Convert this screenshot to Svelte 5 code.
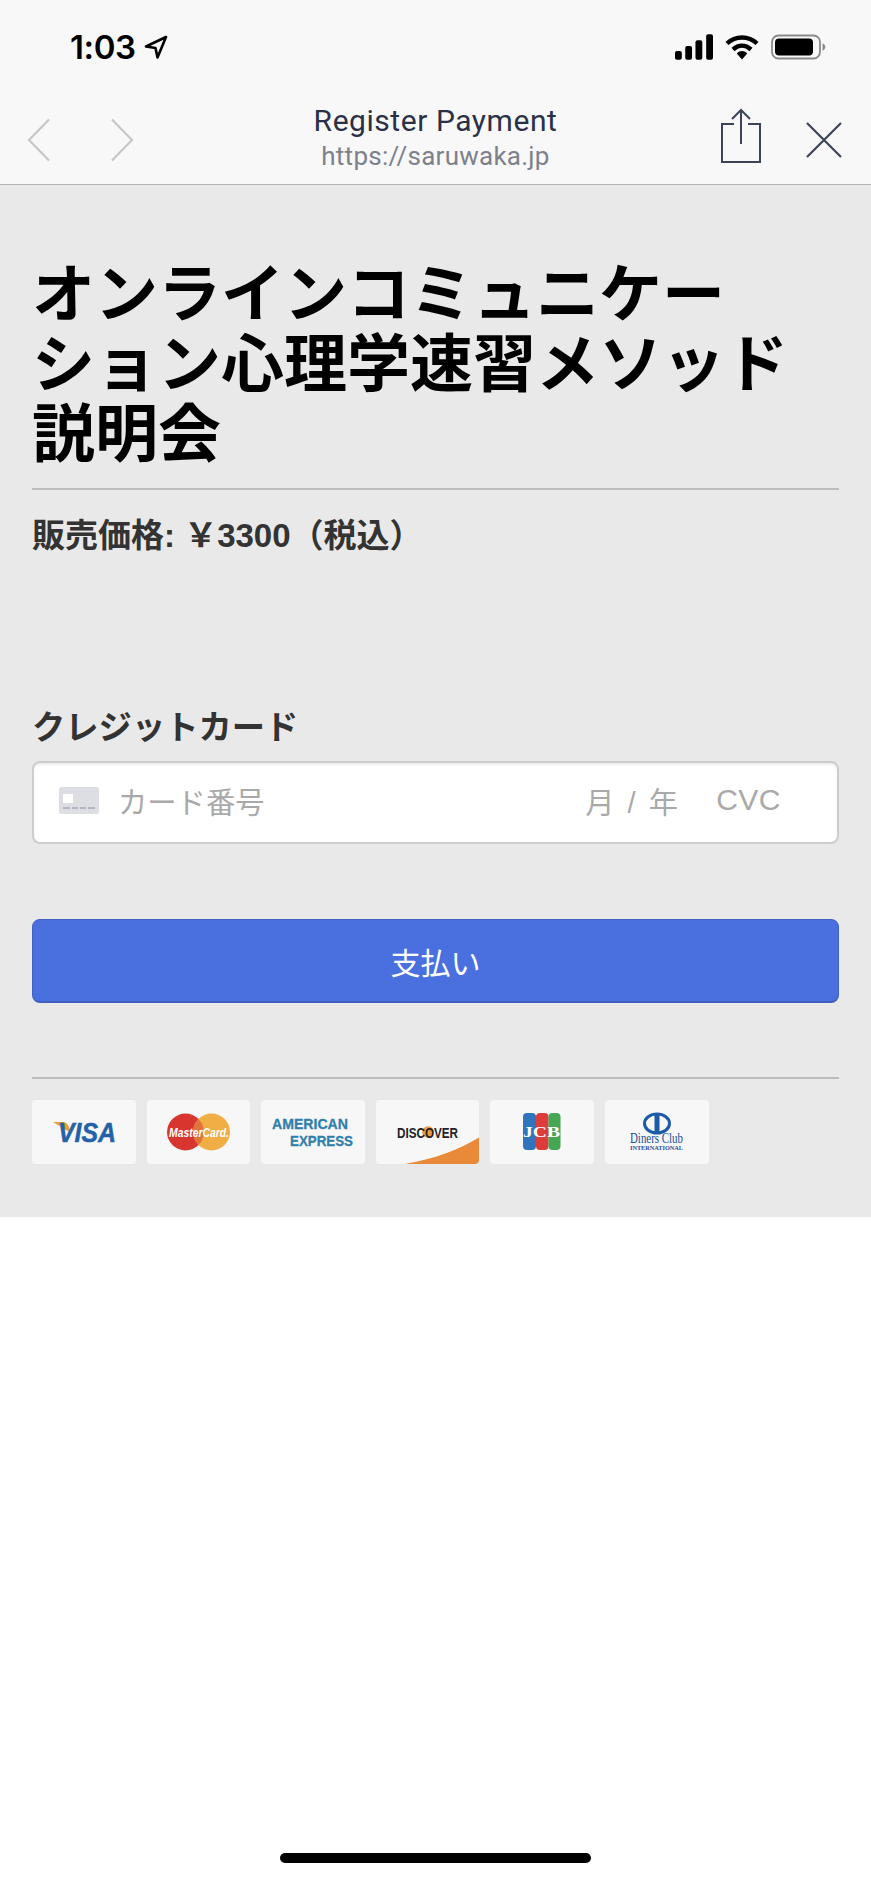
<script>
  // Schermata di pagamento dentro una webview iOS
  const titolo = "オンラインコミュニケーション心理学速習メソッド説明会";
</script>

<div class="screen">
  <div class="status">
    <div class="time">1:03
      <svg class="loc" width="24" height="24" viewBox="0 0 24 24"><path d="M22 2 2 11.500l9.500 1.500 2 9.500z" fill="none" stroke="#000" stroke-width="2.600" stroke-linejoin="round"/></svg>
    </div>
    <div class="status-right">
      <svg width="38" height="26" viewBox="0 0 39 26"><rect x="0" y="17" width="7" height="9" rx="2"/><rect x="10.500" y="12" width="7" height="14" rx="2"/><rect x="21" y="6" width="7" height="20" rx="2"/><rect x="32" y="0" width="7" height="26" rx="2"/></svg>
      <svg width="34" height="26" viewBox="0 0 34 26"><path d="M2 9.500C10.500 1.500 23.500 1.500 32 9.500" fill="none" stroke="#000" stroke-width="4.400"/><path d="M8 15.500C13.500 10.500 20.500 10.500 26 15.500" fill="none" stroke="#000" stroke-width="4.400"/><path d="M11.800 19.500C15 16.300 19 16.300 22.200 19.500L17 25.500z"/></svg>
      <svg width="55" height="26" viewBox="0 0 55 26"><rect x="1" y="1.500" width="48" height="23" rx="6.500" fill="none" stroke="#8a8a8a" stroke-width="1.800"/><rect x="4" y="4.500" width="38" height="17" rx="4"/><path d="M51.500 9.500c2 .6 2.800 2 2.800 3.500s-.8 2.900-2.800 3.500z" fill="#8a8a8a"/></svg>
    </div>
  </div>

  <div class="nav">
    <div class="arrows">
      <svg width="24" height="44" viewBox="0 0 24 44"><path d="M22 1.500 2 22l20 20.500" fill="none" stroke="#c6c7c9" stroke-width="2.200"/></svg>
      <svg width="24" height="44" viewBox="0 0 24 44"><path d="M2 1.500 22 22 2 42.500" fill="none" stroke="#c6c7c9" stroke-width="2.200"/></svg>
    </div>
    <div class="nav-title">
      <div class="nt1">Register Payment</div>
      <div class="nt2">https://saruwaka.jp</div>
    </div>
    <div class="nav-actions">
      <svg width="42" height="56" viewBox="0 0 42 56"><path d="M14 16H2v38h38V16H28" fill="none" stroke="#3d4457" stroke-width="2"/><path d="M21 36V2M12 11l9-9 9 9" fill="none" stroke="#3d4457" stroke-width="2"/></svg>
      <svg width="38" height="38" viewBox="0 0 38 38"><path d="M2 2l34 34M36 2 2 36" fill="none" stroke="#3d4457" stroke-width="2.200"/></svg>
    </div>
  </div>

  <main class="pay" lang="ja">
    <h1>{titolo}</h1>
    <div class="price">販売価格: ￥3300（税込）</div>

    <label class="lab" for="card">クレジットカード</label>
    <div class="field" id="card">
      <svg class="cardicon" width="40" height="27" viewBox="0 0 40 27"><rect width="40" height="27" rx="2.500" fill="#dcdee4"/><rect x="4" y="7" width="10" height="9" fill="#fff"/><path d="M4 21h7M13 21h6M21 21h6M29 21h7" stroke="#b4b7c0" stroke-width="2"/></svg>
      <span class="num">カード番号</span>
      <span class="exp">月 / 年</span>
      <span class="cvc">CVC</span>
    </div>

    <button class="paybtn">支払い</button>

    <div class="brands">
      <div class="brand">
        <svg width="104" height="64" viewBox="0 0 104 64"><path d="M21 22h10q3 0 5 3l3 8z" fill="#e4a231"/><text x="26" y="42" class="visa" textLength="58" lengthAdjust="spacingAndGlyphs">VISA</text></svg>
      </div>
      <div class="brand">
        <svg width="104" height="64" viewBox="0 0 104 64"><circle cx="38.500" cy="32" r="18.500" fill="#d9352f"/><circle cx="64.500" cy="32" r="18.500" fill="#f0ae45"/><path d="M51.500 19a18.500 18.500 0 0 1 0 26 18.500 18.500 0 0 1 0-26z" fill="#e0743a"/><text x="22" y="36.500" class="mc" textLength="60" lengthAdjust="spacingAndGlyphs">MasterCard.</text></svg>
      </div>
      <div class="brand">
        <svg width="104" height="64" viewBox="0 0 104 64"><text x="11" y="29" class="amex" textLength="76" lengthAdjust="spacingAndGlyphs">AMERICAN</text><text x="29" y="45.500" class="amex" textLength="63" lengthAdjust="spacingAndGlyphs">EXPRESS</text></svg>
      </div>
      <div class="brand">
        <svg width="104" height="64" viewBox="0 0 104 64"><path d="M29 64C60 59 84 49 104 37v23a4 4 0 0 1-4 4z" fill="#e98a39"/><circle cx="52" cy="32" r="5.800" fill="#ef9a3f"/><text x="21" y="37.500" class="dis" textLength="61" lengthAdjust="spacingAndGlyphs">DISCOVER</text></svg>
      </div>
      <div class="brand">
        <svg width="104" height="64" viewBox="0 0 104 64"><rect x="33" y="13" width="13" height="37" rx="4" fill="#2f74bd"/><rect x="46" y="13" width="12.500" height="37" rx="4" fill="#de3b3b"/><rect x="58.500" y="13" width="12" height="37" rx="4" fill="#45a653"/><text x="33" y="36.500" class="jcb" textLength="37" lengthAdjust="spacingAndGlyphs">JCB</text></svg>
      </div>
      <div class="brand">
        <svg width="104" height="64" viewBox="0 0 104 64"><ellipse cx="52" cy="23.500" rx="12.500" ry="9.500" fill="none" stroke="#1d5aa8" stroke-width="3"/><rect x="49.500" y="15" width="5" height="17" fill="#1d5aa8"/><text x="25" y="43" class="din" textLength="53" lengthAdjust="spacingAndGlyphs">Diners Club</text><text x="25" y="50" class="din2" textLength="53" lengthAdjust="spacingAndGlyphs">INTERNATIONAL</text></svg>
      </div>
    </div>
  </main>

  <div class="homebar"></div>
</div>

<style>
  :global(body) { background: #fff; }
  .screen { width: 871px; height: 1884px; display: flex; flex-direction: column; font-family: "Liberation Sans", "Noto Sans CJK JP", sans-serif; }

  .status { height: 90px; background: #f8f8f8; display: flex; align-items: center; justify-content: space-between; padding: 4px 45px 0 70px; box-sizing: border-box; }
  .time { font: 600 33px Inter, "Liberation Sans", sans-serif; letter-spacing: -.4px; color: #000; display: flex; align-items: center; gap: 8px; }
  .status-right { display: flex; align-items: center; gap: 12px; }

  .nav { height: 94px; background: #f8f8f8; border-bottom: 1px solid #b5b5b5; display: flex; align-items: center; position: relative; padding: 0 28px 0 27px; }
  .arrows { display: flex; gap: 59px; margin-top: 6px; }
  .nav-title { position: absolute; left: 0; right: 0; text-align: center; top: 14px; font-family: Roboto, sans-serif; }
  .nt1 { font-size: 30px; line-height: 34px; color: #2a3147; letter-spacing: .55px; }
  .nt2 { font-size: 26px; line-height: 36px; color: #7d818b; letter-spacing: .25px; }
  .nav-actions { margin-left: auto; display: flex; align-items: center; gap: 43px; }
  .nav-actions svg:first-child { margin-top: -2px; }
  .nav-actions svg:last-child { margin-top: 6px; }

  .pay { background: #e9e9e9; height: 1032px; box-sizing: border-box; padding: 74px 32px 0; }
  h1 { margin: 0; font-size: 63px; line-height: 70px; font-weight: 700; color: #000; padding-bottom: 19px; border-bottom: 2px solid #bcbcbc; line-break: strict; }
  .price { margin-top: 26px; font-size: 33px; line-height: 40px; font-weight: 700; color: #333; }
  .lab { display: block; margin-top: 152px; font-size: 33.300px; line-height: 40px; font-weight: 700; color: #333; }
  .field { margin-top: 13px; height: 83px; box-sizing: border-box; background: #fff; border: 2px solid #cdcdcd; border-radius: 8px; box-shadow: inset 0 2px 2px #eee; display: flex; align-items: center; padding: 0 0 6px 25px; font-size: 29.300px; color: #a9a9a9; }
  .cardicon { margin-right: 19px; margin-top: 2px; }
  .exp { margin-left: auto; margin-right: 38px; word-spacing: 5px; }
  .cvc { margin-right: 56px; font-size: 30px; letter-spacing: .5px; }
  .paybtn { display: block; width: 100%; height: 84px; margin-top: 75px; background: #4a70df; border: 1px solid #4060bf; border-bottom-width: 2px; border-radius: 8px; color: #fff; font: 400 30px "Liberation Sans", "Noto Sans CJK JP", sans-serif; }
  .brands { margin-top: 74px; padding-top: 21px; border-top: 2px solid #bcbcbc; display: flex; gap: 11px; }
  .brand { width: 103.600px; height: 64px; background: #f7f7f7; border-radius: 4px; overflow: hidden; }
  .brand svg { display: block; }

  .visa { font: italic 700 28px "Liberation Sans", sans-serif; fill: #2361a8; stroke: #2361a8; stroke-width: .5px; }
  .mc { font: italic 700 13px "Liberation Sans", sans-serif; fill: #fff; }
  .amex { font: 700 15px "Liberation Sans", sans-serif; fill: #2f7fac; stroke: #2f7fac; stroke-width: .3px; }
  .dis { font: 700 15px "Liberation Sans", sans-serif; fill: #1f2328; }
  .jcb { font: 700 15px "Liberation Serif", serif; fill: #fff; }
  .din { font: 400 14px "Liberation Serif", serif; fill: #1d4f9c; }
  .din2 { font: 700 6.500px "Liberation Serif", serif; fill: #1d4f9c; }

  .homebar { width: 311px; height: 10px; border-radius: 5px; background: #000; margin: auto auto 21px; }
</style>
